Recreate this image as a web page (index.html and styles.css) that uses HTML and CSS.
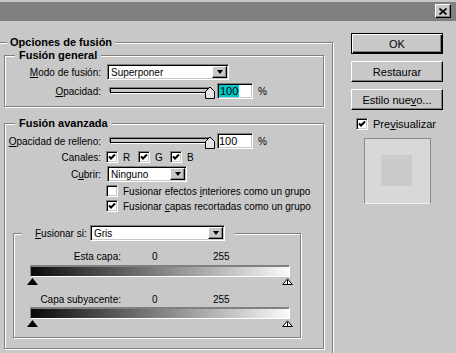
FILE: index.html
```html
<!DOCTYPE html>
<html lang="es">
<head>
    <meta charset="UTF-8">
    <meta name="viewport" content="width=device-width, initial-scale=1.0">
    <title>Estilo de capa</title>
    <link rel="stylesheet" href="styles.css">
</head>
<body>
    <div class="titlebar">
        <span class="close">
            <svg width="8" height="7" viewBox="0 0 8 7"><path d="M0.5 0.5 L7.5 6.5 M7.5 0.5 L0.5 6.5" stroke="#000" stroke-width="1.6"/></svg>
        </span>
    </div>

    <div class="content">
        <div class="group main">
            <span class="legend">Opciones de fusión</span>

            <!-- fusion general -->
            <div class="group general">
                <span class="legend">Fusión general</span>
                <div class="row r-top">
                    <span class="lbl"><span><u>M</u>odo de fusión:</span></span>
                    <div class="select mode"><span>Superponer</span><span class="arrow"></span></div>
                </div>
                <div class="row r-slider">
                    <span class="lbl"><span><u>O</u>pacidad:</span></span>
                    <div class="slider">
                        <div class="track"></div>
                        <svg class="thumb" width="10" height="13" viewBox="0 0 10 13"><polygon points="0.5,12.5 0.5,5.5 5,1 9.5,5.5 9.5,12.5" fill="#e4e4e4" stroke="#000"/></svg>
                    </div>
                    <div class="field"><span class="selected">100</span></div>
                    <span class="pct">%</span>
                </div>
            </div>

            <!-- fusion avanzada -->
            <div class="group advanced">
                <span class="legend">Fusión avanzada</span>
                <div class="row r-top">
                    <span class="lbl"><span><u>O</u>pacidad de relleno:</span></span>
                    <div class="slider">
                        <div class="track"></div>
                        <svg class="thumb" width="10" height="13" viewBox="0 0 10 13"><polygon points="0.5,12.5 0.5,5.5 5,1 9.5,5.5 9.5,12.5" fill="#e4e4e4" stroke="#000"/></svg>
                    </div>
                    <div class="field"><span>100</span></div>
                    <span class="pct">%</span>
                </div>
                <div class="row r-chan">
                    <span class="lbl"><span>Canales:</span></span>
                    <span class="chan first"><span class="cb on"></span>R</span>
                    <span class="chan"><span class="cb on"></span>G</span>
                    <span class="chan"><span class="cb on"></span>B</span>
                </div>
                <div class="row r-cover">
                    <span class="lbl"><span>C<u>u</u>brir:</span></span>
                    <div class="select cover"><span>Ninguno</span><span class="arrow"></span></div>
                </div>
                <div class="row r-opt">
                    <span class="cb"></span><span>Fusionar efectos <u>i</u>nteriores como un grupo</span>
                </div>
                <div class="row r-opt">
                    <span class="cb on"></span><span>Fusionar <u>c</u>apas recortadas como un grupo</span>
                </div>

                <!-- fusionar si -->
                <div class="group blendif">
                    <div class="blend-head">
                        <span class="head-lbl"><u>F</u>usionar si:</span>
                        <div class="select gray"><span>Gris</span><span class="arrow"></span></div>
                    </div>
                    <div class="row r-val">
                        <span class="vlbl">Esta capa:</span>
                        <span class="v0">0</span>
                        <span>255</span>
                    </div>
                    <div class="bar"></div>
                    <div class="marks">
                        <svg width="11" height="7" viewBox="0 0 11 7"><polygon points="5.5,0 11,7 0,7" fill="#000"/></svg>
                        <svg width="11" height="7" viewBox="0 0 11 7"><polygon points="5.5,0.8 10.3,6.5 0.7,6.5" fill="#fff" stroke="#000"/><path d="M5.5 2 V6" stroke="#000"/></svg>
                    </div>
                    <div class="row r-val second">
                        <span class="vlbl">Capa subyacente:</span>
                        <span class="v0">0</span>
                        <span>255</span>
                    </div>
                    <div class="bar second"></div>
                    <div class="marks">
                        <svg width="11" height="7" viewBox="0 0 11 7"><polygon points="5.5,0 11,7 0,7" fill="#000"/></svg>
                        <svg width="11" height="7" viewBox="0 0 11 7"><polygon points="5.5,0.8 10.3,6.5 0.7,6.5" fill="#fff" stroke="#000"/><path d="M5.5 2 V6" stroke="#000"/></svg>
                    </div>
                </div>
            </div>
        </div>

        <div class="side">
            <div class="btn default">OK</div>
            <div class="btn">Restaurar</div>
            <div class="btn">Estilo nue<u>v</u>o...</div>
            <div class="row preview-check"><span class="cb on"></span><span>Pre<u>v</u>isualizar</span></div>
            <div class="preview"><div class="swatch"></div></div>
        </div>
    </div>
</body>
</html>
```

FILE: styles.css
```css
* {
    box-sizing: border-box;
    margin: 0;
    padding: 0;
}

html, body {
    width: 456px;
    height: 353px;
    overflow: hidden;
}

body {
    background: #c8c8c8;
    font-family: 'Liberation Sans', Arial, sans-serif;
    font-size: 10px;
    color: #000;
    white-space: nowrap;
}

u {
    text-underline-offset: 1px;
}

.titlebar {
    margin-top: 2px;
    height: 19px;
    background: #808080;
    display: flex;
    justify-content: flex-end;
    padding: 2px 5px 0 0;
}

.close {
    width: 16px;
    height: 14px;
    background: #c8c8c8;
    border: 1px solid;
    border-color: #fff #000 #000 #fff;
    box-shadow: inset -1px -1px #808080;
    display: flex;
    align-items: center;
    justify-content: center;
}

.content {
    display: flex;
    align-items: flex-start;
}

/* etched group boxes */
.group {
    border: 1px solid #808080;
    box-shadow: inset 1px 1px #fff, 1px 1px #fff;
}

.legend {
    display: block;
    width: max-content;
    height: 13px;
    line-height: 13px;
    margin: -7px 0 0 10px;
    padding: 0 4px;
    background: #c8c8c8;
    font-size: 11px;
    font-weight: bold;
}

.main {
    margin: 21px 0 0 -2px;
    width: 335px;
    height: 340px;
}

.main > .legend {
    margin-left: 8px;
    padding: 0 3px;
}

.general {
    margin: 6px 0 0 5px;
    width: 320px;
    height: 52px;
}

.advanced {
    margin: 16px 0 0 5px;
    width: 320px;
    height: 226px;
}

.row {
    display: flex;
    align-items: center;
}

.lbl {
    display: flex;
    justify-content: flex-end;
    width: 96px;
}

.r-top {
    margin-top: 2px;
    height: 16px;
}

.r-slider {
    margin-top: 3px;
    height: 16px;
}

.advanced .r-top {
    margin-top: 3px;
}

/* sunken controls */
.select, .field, .cb {
    background: #fff;
    border: 1px solid;
    border-color: #808080 #fff #fff #808080;
    box-shadow: inset 1px 1px #000, inset -1px -1px #c8c8c8;
}

.select {
    display: flex;
    align-items: center;
    height: 16px;
    padding: 0 1px 0 3px;
}

.select.mode {
    margin-left: 6px;
    width: 122px;
}

.select.cover {
    margin-left: 6px;
    width: 80px;
}

.select.gray {
    width: 135px;
}

.arrow {
    margin-left: auto;
    width: 15px;
    height: 12px;
    background: #c8c8c8;
    border: 1px solid;
    border-color: #fff #000 #000 #fff;
    box-shadow: inset -1px -1px #808080;
    display: flex;
    align-items: center;
    justify-content: center;
}

.arrow::after {
    content: '';
    border-top: 4px solid #000;
    border-left: 3.5px solid transparent;
    border-right: 3.5px solid transparent;
}

.slider {
    position: relative;
    margin-left: 9px;
    width: 105px;
    height: 16px;
}

.track {
    margin-top: 5px;
    width: 100px;
    height: 5px;
    border: 1px solid #000;
    background: #c8c8c8;
    box-shadow: -1px -1px #808080, 1px 1px #fff;
}

.thumb {
    position: absolute;
    left: 95px;
    top: 3px;
}

.field {
    margin-left: 2px;
    width: 36px;
    height: 16px;
    padding-left: 1px;
    display: flex;
    align-items: center;
    font-size: 11px;
}

.selected {
    background: #00c8c8;
    padding: 0 1px;
}

.pct {
    margin-left: 5px;
}

/* checkboxes */
.cb {
    width: 12px;
    height: 12px;
    margin-right: 5px;
    flex-shrink: 0;
}

.cb.on {
    background: #fff url("data:image/svg+xml,%3Csvg xmlns='http://www.w3.org/2000/svg' width='10' height='10' viewBox='0 0 10 10'%3E%3Cpath d='M2 4.5 L4 6.5 L8 2.5' fill='none' stroke='%23000' stroke-width='2'/%3E%3C/svg%3E") no-repeat 0 0;
}

.r-chan {
    margin-top: 2px;
    height: 12px;
}

.chan {
    display: flex;
    align-items: center;
    width: 32px;
}

.chan.first {
    margin-left: 5px;
}

.r-cover {
    margin-top: 3px;
    height: 16px;
}

.r-opt {
    margin-top: 3px;
    height: 12px;
    padding-left: 101px;
}

/* fusionar si */
.blendif {
    margin: 21px 0 0 8px;
    width: 288px;
    height: 105px;
}

.blend-head {
    display: flex;
    align-items: center;
    width: max-content;
    height: 16px;
    margin: -9px 0 0 8px;
    padding: 0 10px 0 13px;
    background: #c8c8c8;
}

.head-lbl {
    width: 55px;
}

.r-val {
    margin-top: 9px;
    height: 13px;
}

.r-val.second {
    margin-top: 8px;
}

.vlbl {
    width: 107px;
    text-align: right;
}

.v0 {
    margin-left: 31px;
    width: 61px;
}

.bar {
    margin: 2px 0 0 16px;
    width: 260px;
    height: 12px;
    border: 1px solid;
    border-color: #808080 #fff #fff #808080;
    box-shadow: inset 0 1px #808080;
    background: linear-gradient(to right, #0a0a0a, #fafafa);
}

.bar.second {
    margin-top: 1px;
}

.marks {
    display: flex;
    justify-content: space-between;
    margin: 1px 0 0 13px;
    width: 266px;
    height: 7px;
}

.marks svg {
    display: block;
}

/* right column */
.side {
    margin: 12px 0 0 18px;
    width: 92px;
    display: flex;
    flex-direction: column;
}

.btn {
    height: 21px;
    margin-bottom: 7px;
    background: #c8c8c8;
    border: 1px solid;
    border-color: #fff #000 #000 #fff;
    box-shadow: inset -1px -1px #808080;
    display: flex;
    align-items: center;
    justify-content: center;
    font-size: 11px;
}

.btn.default {
    border-color: #000;
    box-shadow: inset 1px 1px #fff, inset -1px -1px #000, inset -2px -2px #808080;
}

.preview-check {
    margin: 1px 0 0 5px;
    height: 12px;
    font-size: 11px;
}

.preview {
    margin: 8px 0 0 13px;
    width: 67px;
    height: 66px;
    padding: 16px;
    background: #d8d8d8;
    border: 1px solid;
    border-color: #8c8c8c #8c8c8c #f0f0f0 #8c8c8c;
}

.swatch {
    width: 31px;
    height: 31px;
    background: #cbcbcb;
}
```
